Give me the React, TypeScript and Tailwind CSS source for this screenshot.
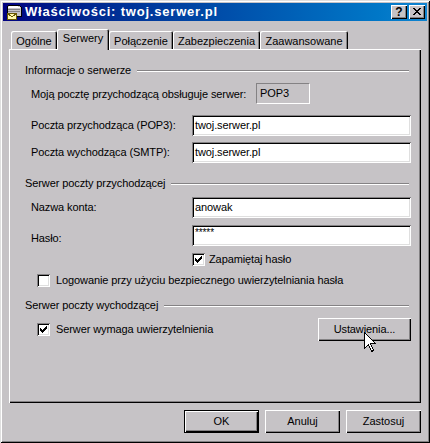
import React from 'react';

const raised = 'shadow-[inset_1px_1px_#ffffff,inset_-1px_-1px_#000000,inset_-2px_-2px_#848284]';
const sunken =
  'shadow-[inset_1px_1px_#848284,inset_-1px_-1px_#ffffff,inset_2px_2px_#000000,inset_-2px_-2px_#dfdfdf]';

const tabs = [
  { label: 'Ogólne', w: 'w-[46px]' },
  { label: 'Serwery', w: 'w-[52px]', active: true },
  { label: 'Połączenie', w: 'w-[64px]' },
  { label: 'Zabezpieczenia', w: 'w-[87px]' },
  { label: 'Zaawansowane', w: 'w-[88px]' },
];

// classic 7x7 check mark, one rect per pixel run
const checkRuns: Array<[number, number, number]> = [
  [6, 0, 1],
  [5, 1, 2],
  [0, 2, 1],
  [4, 2, 3],
  [0, 3, 2],
  [3, 3, 3],
  [0, 4, 5],
  [1, 5, 3],
  [2, 6, 1],
];

function Checkbox({ checked }: { checked?: boolean }) {
  return (
    <div className={`w-[13px] h-[13px] bg-white flex items-center justify-center shrink-0 ${sunken}`}>
      {checked && (
        <svg width="7" height="7" viewBox="0 0 7 7" shapeRendering="crispEdges">
          {checkRuns.map(([x, y, w], i) => (
            <rect key={i} x={x} y={y} width={w} height={1} fill="#000" />
          ))}
        </svg>
      )}
    </div>
  );
}

function GroupHeader({ title, className = '' }: { title: string; className?: string }) {
  return (
    <div className={`flex items-center h-[13px] ${className}`}>
      <span className="whitespace-nowrap">{title}</span>
      <div className="flex-1 ml-[6px] mr-[2px] h-[2px] border-t border-t-[#848284] border-b border-b-white" />
    </div>
  );
}

function Field({ label, value, className = '' }: { label: string; value: string; className?: string }) {
  return (
    <div className={`flex items-center pl-[6px] h-[21px] ${className}`}>
      <span className="w-[161px] whitespace-nowrap">{label}</span>
      <div className={`w-[219px] h-[21px] bg-white flex items-center pl-[3px] ${sunken}`}>{value}</div>
    </div>
  );
}

function Button({ children, className = '', isDefault }: { children: React.ReactNode; className?: string; isDefault?: boolean }) {
  if (isDefault) {
    return (
      <div className={`border border-black ${className}`}>
        <div className={`w-full h-full flex items-center justify-center ${raised}`}>{children}</div>
      </div>
    );
  }
  return <div className={`flex items-center justify-center ${raised} ${className}`}>{children}</div>;
}

function TitleIcon() {
  return (
    <svg width="16" height="16" viewBox="0 0 16 16" shapeRendering="crispEdges">
      <path d="M3 1h10l2 2v9H1V3z" fill="#c6c3c6" stroke="#000" strokeWidth="1" />
      <rect x="2" y="3" width="12" height="1" fill="#fff" />
      <rect x="2" y="5" width="12" height="1" fill="#848284" />
      <rect x="2" y="7" width="12" height="1" fill="#848284" />
      <rect x="3" y="2" width="9" height="1" fill="#fff" />
      <path d="M1.5 9.5h9v6h-9z" fill="#fff8b0" stroke="#6b5a00" strokeWidth="1" />
      <path d="M1.5 9.5l4.5 3.5 4.5-3.5" fill="none" stroke="#6b5a00" strokeWidth="1" />
    </svg>
  );
}

const closeX = [
  [0, 0, 2], [6, 0, 2],
  [1, 1, 2], [5, 1, 2],
  [2, 2, 4],
  [3, 3, 2],
  [2, 4, 4],
  [1, 5, 2], [5, 5, 2],
  [0, 6, 2], [6, 6, 2],
];

export default function App() {
  return (
    <div
      className={`w-[430px] h-[443px] bg-[#c6c3c6] p-[3px] flex flex-col text-[11px] leading-[13px] text-black font-['Liberation_Sans',Arial,sans-serif] shadow-[inset_1px_1px_#dfdfdf,inset_-1px_-1px_#000000,inset_2px_2px_#ffffff,inset_-2px_-2px_#848284]`}
    >
      {/* title bar */}
      <div className="h-[18px] flex items-center bg-linear-to-r from-[#000080] to-[#1084d0] pl-[3px] pr-[2px]">
        <TitleIcon />
        <span className="ml-[3px] text-white font-bold text-[13px] leading-[14px] tracking-[0.8px] whitespace-nowrap">
          Właściwości: twoj.serwer.pl
        </span>
        <div className="ml-auto flex gap-[2px]">
          <div className={`w-[16px] h-[14px] bg-[#c6c3c6] flex items-center justify-center font-bold text-[12px] leading-[12px] ${raised}`}>
            ?
          </div>
          <div className={`w-[16px] h-[14px] bg-[#c6c3c6] flex items-center justify-center ${raised}`}>
            <svg width="8" height="7" viewBox="0 0 8 7" shapeRendering="crispEdges" className="-mt-[1px]">
              {closeX.map(([x, y, w], i) => (
                <rect key={i} x={x} y={y} width={w} height={1} fill="#000" />
              ))}
            </svg>
          </div>
        </div>
      </div>

      <div className="ml-[6px] mt-[8px] flex flex-col">
        {/* tabs */}
        <div className="h-[20px] flex items-end pl-[2px]">
          {tabs.map((t) =>
            t.active ? (
              <div
                key={t.label}
                className={`${t.w} h-[21px] -mb-[1px] relative z-10 bg-[#c6c3c6] rounded-tl-[2px] rounded-tr-[2px] flex justify-center pt-[3px] shadow-[inset_1px_1px_#ffffff,inset_-1px_0_#000000,inset_-2px_0_#848284]`}
              >
                {t.label}
              </div>
            ) : (
              <div
                key={t.label}
                className={`${t.w} h-[18px] rounded-tl-[2px] rounded-tr-[2px] flex justify-center pt-[4px] shadow-[inset_1px_1px_#ffffff,inset_-1px_0_#000000,inset_-2px_0_#848284]`}
              >
                {t.label}
              </div>
            ),
          )}
        </div>

        {/* panel */}
        <div className="w-[412px] h-[354px] pt-[15px] pl-[16px] pr-[10px] flex flex-col tracking-[-0.1px] shadow-[inset_1px_1px_#ffffff,inset_-1px_-1px_#000000,inset_-2px_-2px_#848284]">
          <GroupHeader title="Informacje o serwerze" />
          <div className="mt-[6px] flex items-center pl-[6px] h-[21px]">
            <span className="w-[225px] whitespace-nowrap pt-[2px]">Moją pocztę przychodzącą obsługuje serwer:</span>
            <div className="w-[54px] h-[21px] flex items-center pl-[3px] border border-t-[#848284] border-l-[#848284] border-r-white border-b-white">
              POP3
            </div>
          </div>
          <Field className="mt-[11px]" label="Poczta przychodząca (POP3):" value="twoj.serwer.pl" />
          <Field className="mt-[6px]" label="Poczta wychodząca (SMTP):" value="twoj.serwer.pl" />

          <GroupHeader title="Serwer poczty przychodzącej" className="mt-[14px]" />
          <Field className="mt-[7px]" label="Nazwa konta:" value="anowak" />
          <div className="mt-[7px] flex items-center pl-[6px] h-[21px]">
            <span className="w-[161px] pt-[5px]">Hasło:</span>
            <div className={`w-[219px] h-[21px] bg-white flex items-start pt-[2px] pl-[3px] text-[10px] leading-[12px] ${sunken}`}>*****</div>
          </div>
          <div className="mt-[7px] ml-[167px] h-[13px] flex items-center gap-[4px]">
            <Checkbox checked />
            <span>Zapamiętaj hasło</span>
          </div>
          <div className="mt-[8px] ml-[12px] h-[13px] flex items-center gap-[6px]">
            <Checkbox />
            <span className="whitespace-nowrap">Logowanie przy użyciu bezpiecznego uwierzytelniania hasła</span>
          </div>

          <GroupHeader title="Serwer poczty wychodzącej" className="mt-[12px]" />
          <div className="mt-[6px] h-[23px] flex items-center">
            <div className="ml-[12px] flex items-center gap-[6px]">
              <Checkbox checked />
              <span>Serwer wymaga uwierzytelnienia</span>
            </div>
            <div className="ml-auto relative">
              <Button className="w-[93px] h-[23px]">Ustawienia...</Button>
              <svg
                className="absolute left-[46px] top-[14px]"
                width="12"
                height="20"
                viewBox="0 0 12 20"
                shapeRendering="crispEdges"
              >
                <path d="M0.5 0.5V16.5L4.5 12.5L7.5 19.5L9.5 18.5L6.5 11.5H11.5Z" fill="#fff" stroke="#000" strokeWidth="1" />
              </svg>
            </div>
          </div>
        </div>

        {/* dialog buttons */}
        <div className="mt-[7px] flex justify-end gap-[6px] w-[412px]">
          <Button isDefault className="w-[75px] h-[23px]">OK</Button>
          <Button className="w-[75px] h-[23px]">Anuluj</Button>
          <Button className="w-[75px] h-[23px]">Zastosuj</Button>
        </div>
      </div>
    </div>
  );
}
